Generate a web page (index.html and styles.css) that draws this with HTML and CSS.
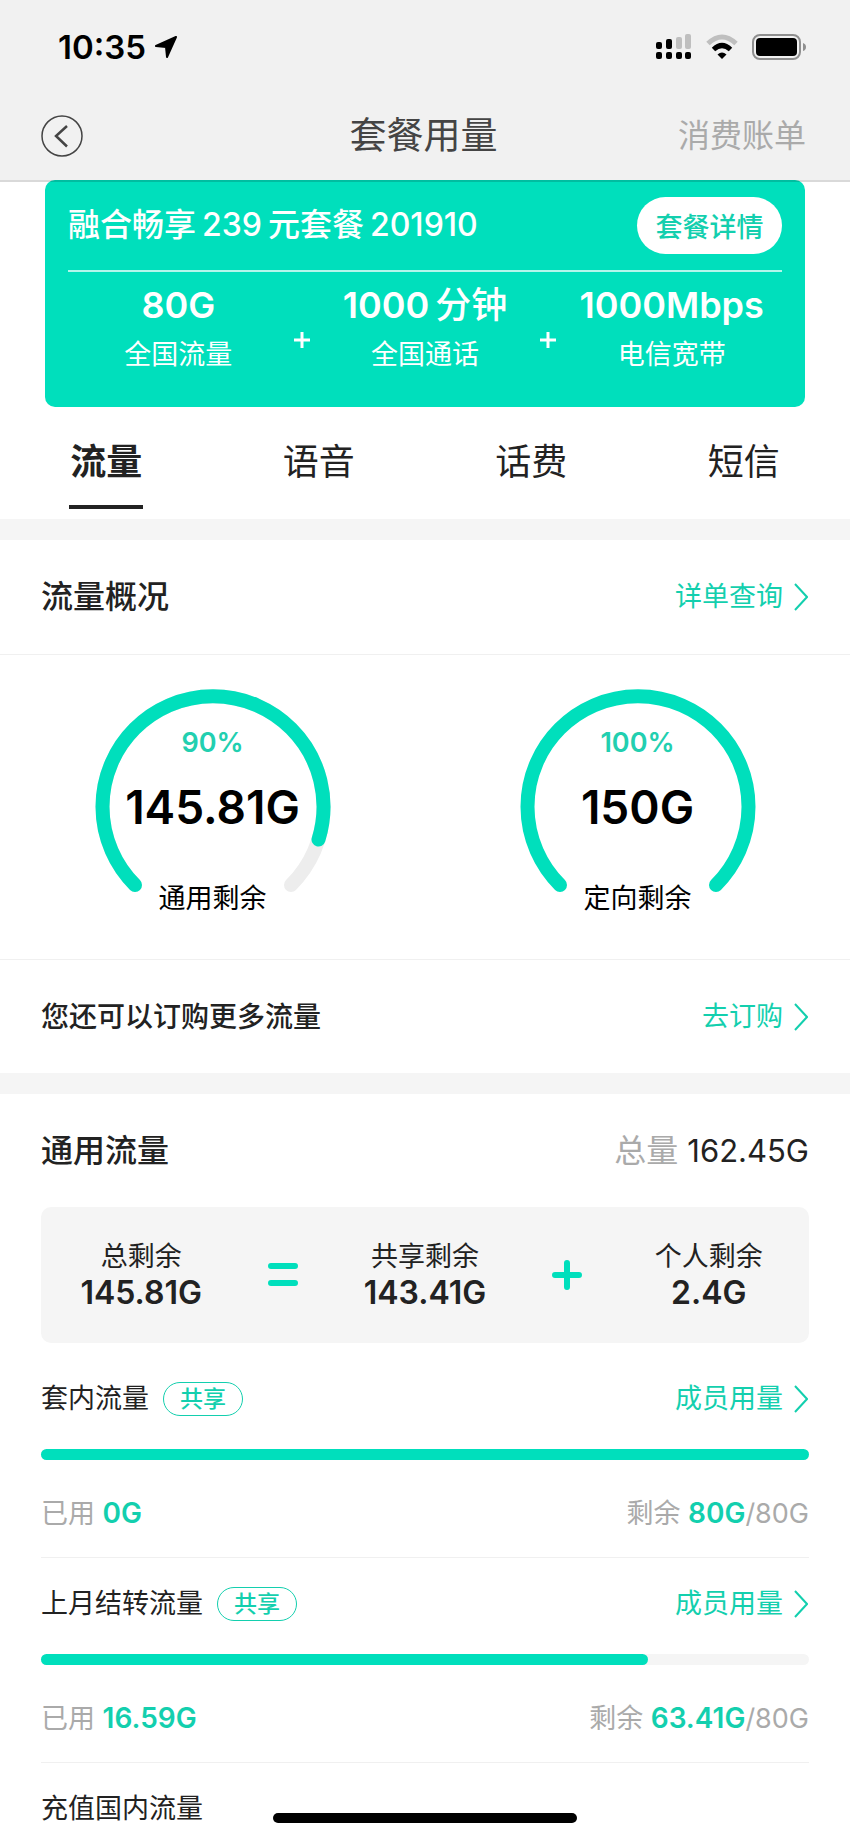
FILE: index.html
```html
<!DOCTYPE html>
<html lang="zh-CN">

<head>
    <meta charset="UTF-8">
    <meta name="viewport" content="width=device-width, initial-scale=1">
    <title>套餐用量</title>
    <link rel="stylesheet" href="styles.css">
</head>

<body>
    <header class="header">
        <div class="status">
            <div class="time">
                <span>10:35</span>
                <svg class="location" width="24" height="24" viewBox="0 0 24 24">
                    <path d="M22 2 L2 11 L12 12 L13 22 Z" fill="#000" stroke="#000" stroke-width="2" stroke-linejoin="round" />
                </svg>
            </div>
            <div class="status-icons">
                <svg width="36" height="26" viewBox="0 0 36 26">
                    <g fill="#bfbfbf">
                        <rect x="20" y="3" width="6" height="12" rx="2" />
                        <rect x="29" y="0" width="6" height="15" rx="2" />
                    </g>
                    <g fill="#000">
                        <rect x="0" y="8" width="6" height="7" rx="2" />
                        <rect x="10" y="5" width="6" height="10" rx="2" />
                        <rect x="0" y="18" width="6" height="7" rx="2" />
                        <rect x="10" y="18" width="6" height="7" rx="2" />
                        <rect x="20" y="18" width="6" height="7" rx="2" />
                        <rect x="29" y="18" width="6" height="7" rx="2" />
                    </g>
                </svg>
                <svg width="32" height="26" viewBox="0 0 32 26">
                    <path d="M2 9.500 Q16 -3.500 30 9.500" fill="none" stroke="#bfbfbf" stroke-width="5" />
                    <path d="M7.500 15.500 Q16 7.500 24.500 15.500" fill="none" stroke="#000" stroke-width="5" />
                    <path d="M16 25 L11.500 20.500 Q16 16.500 20.500 20.500 Z" fill="#000" />
                </svg>
                <svg width="54" height="26" viewBox="0 0 54 26">
                    <rect x="1" y="1" width="47" height="24" rx="7" fill="none" stroke="#8f8f8f" stroke-width="2" />
                    <rect x="4" y="4" width="41" height="18" rx="4" fill="#000" />
                    <path d="M51 9 Q54 10 54 13 Q54 16 51 17 Z" fill="#8f8f8f" />
                </svg>
            </div>
        </div>
        <nav class="nav">
            <button class="back" type="button" aria-label="返回">
                <svg width="42" height="42" viewBox="0 0 42 42" fill="none" stroke="#444">
                    <circle cx="21" cy="21" r="20" stroke-width="1.500" />
                    <path d="M26 11 L15 21 L26 31.500" stroke-width="2.500" />
                </svg>
            </button>
            <h1>套餐用量</h1>
            <a class="bill" href="#">消费账单</a>
        </nav>
    </header>

    <section class="card">
        <div class="card-head">
            <h2>融合畅享<span class="num">239</span>元套餐<span class="num">201910</span></h2>
            <button class="detail" type="button">套餐详情</button>
        </div>
        <div class="card-body">
            <div class="benefit">
                <strong>80G</strong>
                <span>全国流量</span>
            </div>
            <svg class="plus" width="16" height="16" viewBox="0 0 16 16" stroke="#fff" stroke-width="3">
                <path d="M0 8 H16 M8 0 V16" />
            </svg>
            <div class="benefit">
                <strong>1000<span class="unit">分钟</span></strong>
                <span>全国通话</span>
            </div>
            <svg class="plus" width="16" height="16" viewBox="0 0 16 16" stroke="#fff" stroke-width="3">
                <path d="M0 8 H16 M8 0 V16" />
            </svg>
            <div class="benefit">
                <strong>1000Mbps</strong>
                <span>电信宽带</span>
            </div>
        </div>
    </section>

    <div class="tabs">
        <button class="tab active" type="button">流量</button>
        <button class="tab" type="button">语音</button>
        <button class="tab" type="button">话费</button>
        <button class="tab" type="button">短信</button>
    </div>

    <section class="block">
        <div class="block-head line">
            <h2>流量概况</h2>
            <a class="more" href="#">详单查询
                <svg width="14" height="28" viewBox="0 0 14 28"><path d="M1 1 L13 14 L1 27" /></svg>
            </a>
        </div>
        <div class="gauges line">
            <div class="gauge">
                <svg width="236" height="236" viewBox="0 0 236 236">
                    <path class="track" d="M40 196 A110.500 110.500 0 1 1 196 196" />
                    <path class="value" pathLength="100" stroke-dasharray="89.700 100" d="M40 196 A110.500 110.500 0 1 1 196 196" />
                </svg>
                <div class="gauge-text">
                    <span class="percent">90%</span>
                    <strong>145.81G</strong>
                    <span class="name">通用剩余</span>
                </div>
            </div>
            <div class="gauge">
                <svg width="236" height="236" viewBox="0 0 236 236">
                    <path class="value" d="M40 196 A110.500 110.500 0 1 1 196 196" />
                </svg>
                <div class="gauge-text">
                    <span class="percent">100%</span>
                    <strong>150G</strong>
                    <span class="name">定向剩余</span>
                </div>
            </div>
        </div>
        <div class="block-head">
            <h3>您还可以订购更多流量</h3>
            <a class="more" href="#">去订购
                <svg width="14" height="28" viewBox="0 0 14 28"><path d="M1 1 L13 14 L1 27" /></svg>
            </a>
        </div>
    </section>

    <section class="block">
        <div class="block-head">
            <h2>通用流量</h2>
            <p class="total">总量 <span>162.45G</span></p>
        </div>
        <div class="sum">
            <div class="sum-item">
                <span>总剩余</span>
                <strong>145.81G</strong>
            </div>
            <svg width="30" height="30" viewBox="0 0 30 30">
                <path d="M3 6 H27 M3 23 H27" />
            </svg>
            <div class="sum-item">
                <span>共享剩余</span>
                <strong>143.41G</strong>
            </div>
            <svg width="30" height="30" viewBox="0 0 30 30">
                <path d="M3 15 H27 M15 3 V27" />
            </svg>
            <div class="sum-item">
                <span>个人剩余</span>
                <strong>2.4G</strong>
            </div>
        </div>

        <ul class="list">
            <li>
                <div class="item-head">
                    <span>套内流量</span>
                    <span class="tag">共享</span>
                    <a class="more" href="#">成员用量
                        <svg width="14" height="28" viewBox="0 0 14 28"><path d="M1 1 L13 14 L1 27" /></svg>
                    </a>
                </div>
                <div class="bar">
                    <div class="bar-fill" style="width: 100%"></div>
                </div>
                <div class="item-foot">
                    <span>已用 <b>0G</b></span>
                    <span>剩余 <b>80G</b>/80G</span>
                </div>
            </li>
            <li>
                <div class="item-head">
                    <span>上月结转流量</span>
                    <span class="tag">共享</span>
                    <a class="more" href="#">成员用量
                        <svg width="14" height="28" viewBox="0 0 14 28"><path d="M1 1 L13 14 L1 27" /></svg>
                    </a>
                </div>
                <div class="bar">
                    <div class="bar-fill" style="width: 79%"></div>
                </div>
                <div class="item-foot">
                    <span>已用 <b>16.59G</b></span>
                    <span>剩余 <b>63.41G</b>/80G</span>
                </div>
            </li>
            <li>
                <div class="item-head">
                    <span>充值国内流量</span>
                </div>
            </li>
        </ul>
    </section>

    <div class="home"></div>
</body>

</html>
```
FILE: styles.css
```css
* {
    box-sizing: border-box;
    padding: 0;
    margin: 0;
}

body {
    font-family: Inter, "Noto Sans CJK SC", sans-serif;
    font-size: 27px;
    line-height: 40px;
    color: #222;
    background: #fff;
}

ul {
    list-style: none;
}

a {
    text-decoration: none;
}

button {
    border: none;
    background: none;
    font-family: inherit;
    color: inherit;
    cursor: pointer;
}

svg {
    display: block;
    flex: none;
}

h1,
h2,
h3 {
    font-weight: 500;
}

h2 {
    font-size: 32px;
}

h3 {
    font-size: 28px;
}

/* 顶部 */
.header {
    position: relative;
    z-index: 1;
    height: 180px;
    background: #f1f1f1;
    box-shadow: 0 2px 0 rgba(0, 0, 0, 0.15);
}

.status {
    display: flex;
    justify-content: space-between;
    align-items: center;
    height: 92px;
    padding: 2px 44px 0 58px;
}

.time {
    display: flex;
    align-items: center;
    gap: 8px;
    font-size: 33px;
    font-weight: 600;
    color: #000;
}

.status-icons {
    display: flex;
    gap: 14px;
}

.nav {
    display: grid;
    grid-template-columns: 1fr auto 1fr;
    align-items: center;
    height: 87px;
    padding: 0 44px 0 41px;
}

.back {
    justify-self: start;
}

.nav h1 {
    font-size: 37px;
    font-weight: 400;
    color: #444;
}

.bill {
    justify-self: end;
    font-size: 32px;
    color: #aaa;
}

/* 套餐卡片 */
.card {
    margin: 0 45px;
    padding: 0 10px;
    border-radius: 10px;
    background: #00dfbc;
    color: #fff;
}

.card-head {
    display: flex;
    justify-content: space-between;
    align-items: center;
    height: 92px;
    margin: 0 13px;
    border-bottom: 2px solid rgba(255, 255, 255, 0.7);
}

.card-head .num {
    margin: 0 6px;
}

.detail {
    width: 145px;
    height: 57px;
    border-radius: 29px;
    background: #fff;
    color: #13cfae;
    font-size: 27px;
    font-weight: 500;
}

.card-body {
    display: grid;
    grid-template-columns: 1fr 0 1fr 0 1fr;
    padding: 11px 0 34px;
}

.benefit {
    display: flex;
    flex-direction: column;
    align-items: center;
    gap: 10px;
    line-height: 36px;
}

.benefit strong {
    font-size: 36px;
    line-height: 44px;
    font-weight: 600;
}

.benefit .unit {
    margin-left: 6px;
    font-weight: 500;
}

.plus {
    justify-self: center;
    margin-top: 49px;
}

/* 标签 */
.tabs {
    display: grid;
    grid-template-columns: repeat(4, 1fr);
    justify-items: center;
    height: 112px;
    padding: 33px 0 10px;
}

.tab {
    width: 74px;
    padding-bottom: 21px;
    border-bottom: 4px solid transparent;
    font-size: 36px;
    line-height: 44px;
}

.tab.active {
    border-color: #222;
    font-weight: 600;
}

/* 区块 */
.block {
    border-top: 21px solid #f5f5f5;
}

.block-head {
    display: flex;
    justify-content: space-between;
    align-items: center;
    height: 113px;
    padding: 0 41px;
}

.line {
    border-bottom: 1px solid #f0f0f0;
}

.block-head.line {
    height: 115px;
}

.more {
    display: flex;
    align-items: center;
    gap: 11px;
    padding-right: 1px;
    color: #13cfae;
}

.more svg {
    fill: none;
    stroke: #13cfae;
    stroke-width: 2;
}

/* 圆环 */
.gauges {
    display: grid;
    grid-template-columns: 1fr 1fr;
    padding: 34px 0;
}

.gauge {
    display: grid;
    justify-items: center;
    color: #000;
}

.gauge svg,
.gauge-text {
    grid-area: 1 / 1;
}

.gauge path {
    fill: none;
    stroke-width: 14;
    stroke-linecap: round;
}

.track {
    stroke: #ededed;
}

.value {
    stroke: #00dfbc;
}

.gauge-text {
    display: flex;
    flex-direction: column;
    align-items: center;
    padding-top: 36px;
}

.percent {
    line-height: 36px;
    font-weight: 600;
    color: #22cfb0;
}

.gauge-text strong {
    margin: 18px 0 44px;
    font-size: 46px;
    line-height: 56px;
    font-weight: 600;
}

/* 通用流量 */
.total {
    font-size: 32px;
    color: #aaa;
}

.total span {
    font-size: 31px;
    color: #222;
}

.sum {
    display: grid;
    grid-template-columns: 12fr 5fr 12fr 5fr 12fr;
    align-items: center;
    justify-items: center;
    height: 136px;
    margin: 0 41px 10px;
    border-radius: 10px;
    background: #f5f5f5;
}

.sum svg {
    stroke: #00dfbc;
    stroke-width: 6;
    stroke-linecap: round;
}

.sum-item {
    display: flex;
    flex-direction: column;
    align-items: center;
    line-height: 36px;
}

.sum-item strong {
    font-size: 32px;
    font-weight: 600;
}

.list {
    margin: 0 41px;
}

.list li {
    padding: 23px 0;
    border-bottom: 1px solid #f0f0f0;
}

.list li:last-child {
    padding-bottom: 8px;
    border-bottom: none;
}

.item-head {
    display: flex;
    align-items: center;
    height: 46px;
}

.item-head .more {
    margin-left: auto;
}

.tag {
    margin-left: 14px;
    padding: 0 16px;
    border: 1px solid #13cfae;
    border-radius: 17px;
    font-size: 23px;
    line-height: 32px;
    font-weight: 500;
    color: #13cfae;
}

.bar {
    height: 11px;
    margin: 27px 0 33px;
    border-radius: 6px;
    background: #f5f5f5;
}

.bar-fill {
    height: 100%;
    border-radius: 6px;
    background: #00dfbc;
}

.item-foot {
    display: flex;
    justify-content: space-between;
    color: #aaa;
}

.item-foot b {
    font-size: 28px;
    font-weight: 600;
    color: #13cfae;
}

/* 底部横条 */
.home {
    position: fixed;
    left: 50%;
    bottom: 17px;
    width: 304px;
    height: 10px;
    margin-left: -152px;
    border-radius: 5px;
    background: #000;
}
```
